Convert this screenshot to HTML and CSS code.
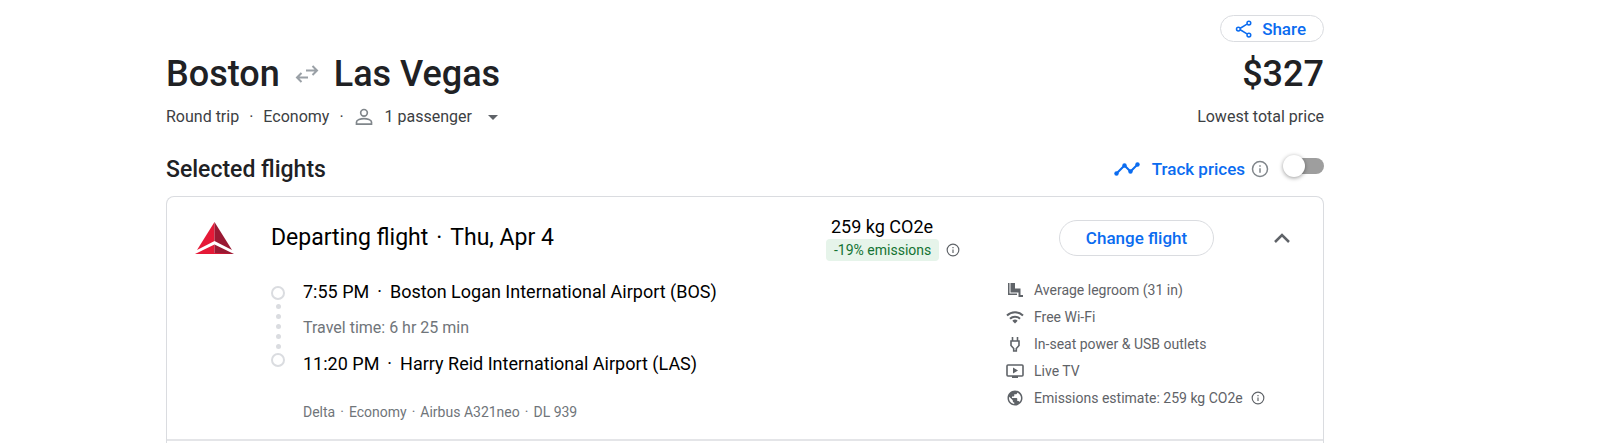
FILE: index.html
```html
<!DOCTYPE html>
<html lang="en">
<head>
  <meta charset="UTF-8">
  <meta name="viewport" content="width=device-width, initial-scale=1.0">
  <title>Boston to Las Vegas</title>
  <link rel="stylesheet" href="styles.css">
</head>
<body>

  <!-- shared info icon -->
  <svg class="defs" width="0" height="0" aria-hidden="true">
    <symbol id="info" viewBox="0 0 24 24">
      <path d="M11 7h2v2h-2zM11 11h2v6h-2zM12 1a11 11 0 1 0 0 22 11 11 0 0 0 0-22zm0 20a9 9 0 1 1 0-18 9 9 0 0 1 0 18z"/>
    </symbol>
  </svg>

  <main class="page">
    <div class="toolbar">
      <button class="pill share">
        <svg class="icon-18" viewBox="0 0 24 24" fill="none" stroke="currentColor" stroke-width="2">
          <circle cx="4.500" cy="12" r="2.500"/>
          <circle cx="18.500" cy="4" r="2.500"/>
          <circle cx="18.500" cy="20" r="2.500"/>
          <path d="M7 11l9-5.500M7 13l9 5.500"/>
        </svg>
        Share
      </button>
    </div>

    <header class="trip">
      <h1 class="route">
        Boston
        <svg class="swap" viewBox="0 0 24 24" fill="none" stroke="currentColor" stroke-width="2">
          <path d="M11 8.500h11M17.500 4l4.500 4.500-4.500 4.500M13 15.500H2M6.500 11L2 15.500 6.500 20"/>
        </svg>
        Las Vegas
      </h1>
      <div class="price">$327</div>
    </header>

    <div class="trip-info">
      <span>Round trip</span>
      <span>·</span>
      <span>Economy</span>
      <span>·</span>
      <label class="passengers">
        <svg class="icon-20" viewBox="0 0 24 24" fill="none" stroke="currentColor" stroke-width="2">
          <circle cx="12" cy="7" r="4"/>
          <path d="M3 20.500v-2.500c0-2.500 5-4 9-4s9 1.500 9 4v2.500z"/>
        </svg>
        <select aria-label="Passengers">
          <option>1 passenger</option>
        </select>
        <svg class="caret" viewBox="0 0 10 5"><path d="M0 0h10L5 5z"/></svg>
      </label>
      <span class="price-note">Lowest total price</span>
    </div>

    <div class="section-head">
      <h2>Selected flights</h2>
      <div class="track">
        <svg class="trend" viewBox="0 0 26 14" fill="none" stroke="currentColor" stroke-width="2">
          <path d="M2.500 11.500l8-8 6 6 7-7"/>
          <g fill="currentColor" stroke="none">
            <circle cx="2.500" cy="11.500" r="2.200"/>
            <circle cx="10.500" cy="3.500" r="2.200"/>
            <circle cx="16.500" cy="9.500" r="2.200"/>
            <circle cx="23.500" cy="2.500" r="2.200"/>
          </g>
        </svg>
        <label for="track-prices">Track prices</label>
        <svg class="info icon-18"><use href="#info"/></svg>
        <input class="switch" type="checkbox" id="track-prices">
      </div>
    </div>

    <section class="card">
      <div class="card-head">
        <svg class="logo" viewBox="0 0 39 32">
          <path fill="#e51937" d="M19.500 0v19L2 28z"/>
          <path fill="#991933" d="M19.500 0v19L37 28z"/>
          <path fill="#e51937" d="M19.500 22.500V32H0z"/>
          <path fill="#991933" d="M19.500 22.500V32H39z"/>
          <path fill="#e51937" d="M0 32l19.500-1L39 32z"/>
        </svg>
        <h3><span>Departing flight</span><span>·</span><span>Thu, Apr 4</span></h3>
        <div class="emissions">
          <div class="co2">259 kg CO2e</div>
          <div class="co2-diff">
            <span class="badge">-19% emissions</span>
            <svg class="info icon-14"><use href="#info"/></svg>
          </div>
        </div>
        <button class="pill change">Change flight</button>
        <button class="collapse" aria-label="Collapse">
          <svg viewBox="0 0 16 10" fill="none" stroke="currentColor" stroke-width="2.500">
            <path d="M1 9l7-7 7 7"/>
          </svg>
        </button>
      </div>

      <div class="card-body">
        <div class="leg">
          <div class="timeline">
            <i class="stop"></i>
            <i class="dot"></i>
            <i class="dot"></i>
            <i class="dot"></i>
            <i class="dot"></i>
            <i class="dot"></i>
            <i class="stop"></i>
          </div>
          <div class="leg-text">
            <div class="airport"><span>7:55 PM</span><span>·</span><span>Boston Logan International Airport (BOS)</span></div>
            <div class="duration">Travel time: 6 hr 25 min</div>
            <div class="airport"><span>11:20 PM</span><span>·</span><span>Harry Reid International Airport (LAS)</span></div>
            <div class="aircraft"><span>Delta</span><span>·</span><span>Economy</span><span>·</span><span>Airbus A321neo</span><span>·</span><span>DL 939</span></div>
          </div>
        </div>

        <ul class="amenities">
          <li>
            <svg viewBox="0 0 18 18">
              <path d="M4.500 2H9v5.500h5.500V14H17v2h-4.500v-4.500h-8z"/>
              <path d="M2 2h1.500v10.500H11V14H2z"/>
            </svg>
            Average legroom (31 in)
          </li>
          <li>
            <svg viewBox="0 0 18 18" fill="none" stroke="#5f6368" stroke-width="2">
              <path d="M1 7.500a11.500 11.500 0 0 1 16 0M4 10.800a7 7 0 0 1 10 0"/>
              <path fill="#5f6368" stroke="none" d="M6.300 12.800a4 4 0 0 1 5.400 0L9 15.500z"/>
            </svg>
            Free Wi-Fi
          </li>
          <li>
            <svg viewBox="0 0 18 18" fill="none" stroke="#5f6368" stroke-width="1.600">
              <path d="M6.500 2v4M11.500 2v4M5 6h8v4.500l-2.700 3V16H7.700v-2.500L5 10.500z"/>
            </svg>
            In-seat power &amp; USB outlets
          </li>
          <li>
            <svg viewBox="0 0 18 18">
              <rect x="1" y="3" width="16" height="11" rx="1" fill="none" stroke="#5f6368" stroke-width="1.600"/>
              <path d="M7 5.500v6l5-3zM6 14h6v2H6z"/>
            </svg>
            Live TV
          </li>
          <li>
            <svg viewBox="0 0 24 24">
              <path d="M12 2C6.480 2 2 6.480 2 12s4.480 10 10 10 10-4.480 10-10S17.520 2 12 2zm-1 17.930c-3.950-.49-7-3.850-7-7.930 0-.62.080-1.210.210-1.790L9 15v1c0 1.100.9 2 2 2v1.930zm6.900-2.540c-.26-.81-1-1.390-1.900-1.390h-1v-3c0-.55-.45-1-1-1H8v-2h2c.55 0 1-.45 1-1V7h2c1.100 0 2-.9 2-2v-.41c2.930 1.190 5 4.060 5 7.410 0 2.080-.8 3.970-2.100 5.390z"/>
            </svg>
            Emissions estimate: 259 kg CO2e
            <svg class="info"><use href="#info"/></svg>
          </li>
        </ul>
      </div>
    </section>
  </main>

</body>
</html>
```

FILE: styles.css
```css
* {
  box-sizing: border-box;
}

body {
  margin: 0;
  background-color: #fff;
  color: #202124;
  font-family: Roboto, sans-serif;
  font-size: 16px;
  line-height: 24px;
}

h1, h2, h3 {
  margin: 0;
  font-weight: 500;
}

button, select {
  font: inherit;
  cursor: pointer;
}

svg {
  flex: none;
  fill: #5f6368;
}

svg[fill="none"] {
  fill: none;
}

.defs {
  position: absolute;
}

.page {
  padding: 15px 276px 0 166px;
}

.icon-20 {
  width: 20px;
  height: 20px;
}

.icon-18 {
  width: 18px;
  height: 18px;
}

.icon-14 {
  width: 14px;
  height: 14px;
}

.pill {
  display: flex;
  align-items: center;
  justify-content: center;
  border: 1px solid #dadce0;
  background-color: #fff;
  color: #0b6cf0;
  font-size: 17px;
  font-weight: 500;
}

/* top */
.toolbar {
  display: flex;
  justify-content: flex-end;
}

.share {
  gap: 9px;
  height: 27px;
  padding: 0 17px 0 14px;
  border-radius: 14px;
}

.trip {
  display: flex;
  align-items: center;
  justify-content: space-between;
  margin-top: 10px;
  line-height: 44px;
}

.route {
  display: flex;
  align-items: center;
  gap: 15px;
  font-size: 36px;
}

.swap {
  width: 24px;
  height: 24px;
  color: #9aa0a6;
}

.price {
  font-size: 36px;
  font-weight: 500;
}

.trip-info {
  display: flex;
  align-items: center;
  gap: 10px;
  margin-top: 9px;
  color: #3c4043;
}

.passengers {
  display: flex;
  align-items: center;
  gap: 11px;
  color: #80868b;
}

.passengers select {
  appearance: none;
  border: 0;
  padding: 0;
  background: none;
  color: #3c4043;
}

.caret {
  width: 10px;
  height: 5px;
  margin-left: 4px;
}

.price-note {
  margin-left: auto;
}

.section-head {
  display: flex;
  align-items: center;
  justify-content: space-between;
  margin-top: 23px;
  padding-bottom: 10px;
}

.section-head h2 {
  padding-top: 2px;
  font-size: 23px;
  line-height: 32px;
}

.track {
  display: flex;
  align-items: center;
  color: #0b6cf0;
  font-size: 17px;
  font-weight: 500;
}

.trend {
  width: 26px;
  height: 14px;
  margin-right: 12px;
}

.track .info {
  margin: 0 17px 0 6px;
  fill: #80868b;
}

.switch {
  appearance: none;
  position: relative;
  width: 38px;
  height: 16px;
  margin: 0 0 6px;
  border-radius: 8px;
  background-color: #9e9e9e;
  cursor: pointer;
}

.switch::before {
  content: "";
  position: absolute;
  top: -3px;
  left: -3px;
  width: 22px;
  height: 22px;
  border-radius: 50%;
  background-color: #fff;
  box-shadow: 0 1px 4px rgba(0, 0, 0, 0.4);
}

.switch:checked::before {
  left: 19px;
}

/* flight card */
.card {
  padding-bottom: 2px;
  border: 1px solid #dadce0;
  border-bottom: 0;
  border-radius: 8px 8px 0 0;
  color: #000;
}

.card-head {
  display: flex;
  align-items: center;
  padding: 18px 33px 0 28px;
}

.logo {
  width: 39px;
  height: 32px;
}

.card-head h3 {
  display: flex;
  flex: 1;
  gap: 8px;
  margin-left: 37px;
  font-size: 23px;
  font-weight: 400;
  line-height: 32px;
}

.emissions {
  width: 134px;
}

.co2 {
  padding-left: 5px;
  font-size: 18px;
}

.co2-diff {
  display: flex;
  align-items: center;
  justify-content: space-between;
}

.badge {
  padding: 0 8px;
  border-radius: 4px;
  background-color: #e6f4ea;
  color: #137333;
  font-size: 14px;
  line-height: 22px;
  white-space: nowrap;
}

.change {
  width: 155px;
  height: 36px;
  margin-left: 99px;
  border-radius: 18px;
}

.collapse {
  display: flex;
  margin-left: 60px;
  padding: 0;
  border: 0;
  background: none;
  color: #5f6368;
}

.collapse svg {
  width: 16px;
  height: 10px;
}

.card-body {
  display: flex;
  justify-content: space-between;
  padding: 16px 0 15px 104px;
  border-bottom: 2px solid #e4e5e8;
}

.leg {
  display: flex;
  gap: 18px;
}

.timeline {
  display: flex;
  flex-direction: column;
  align-items: center;
  gap: 5px;
  padding-top: 10px;
}

.stop {
  width: 14px;
  height: 14px;
  margin: -1px 0;
  border: 2px solid #dadce0;
  border-radius: 50%;
}

.dot {
  width: 5px;
  height: 5px;
  border-radius: 50%;
  background-color: #dadce0;
}

.leg-text {
  padding-top: 3px;
}

.airport {
  display: flex;
  gap: 8px;
  font-size: 18px;
}

.duration {
  margin: 12px 0;
  color: #70757a;
}

.aircraft {
  display: flex;
  gap: 5px;
  margin-top: 24px;
  color: #70757a;
  font-size: 14px;
}

.amenities {
  display: flex;
  flex-direction: column;
  gap: 3px;
  width: 317px;
  margin: 0;
  padding: 1px 0 0;
  list-style: none;
  color: #5f6368;
  font-size: 14px;
}

.amenities li {
  display: flex;
  align-items: center;
  gap: 10px;
}

.amenities svg {
  width: 18px;
  height: 18px;
}

.amenities .info {
  width: 14px;
  height: 14px;
  margin-left: -2px;
}
```
